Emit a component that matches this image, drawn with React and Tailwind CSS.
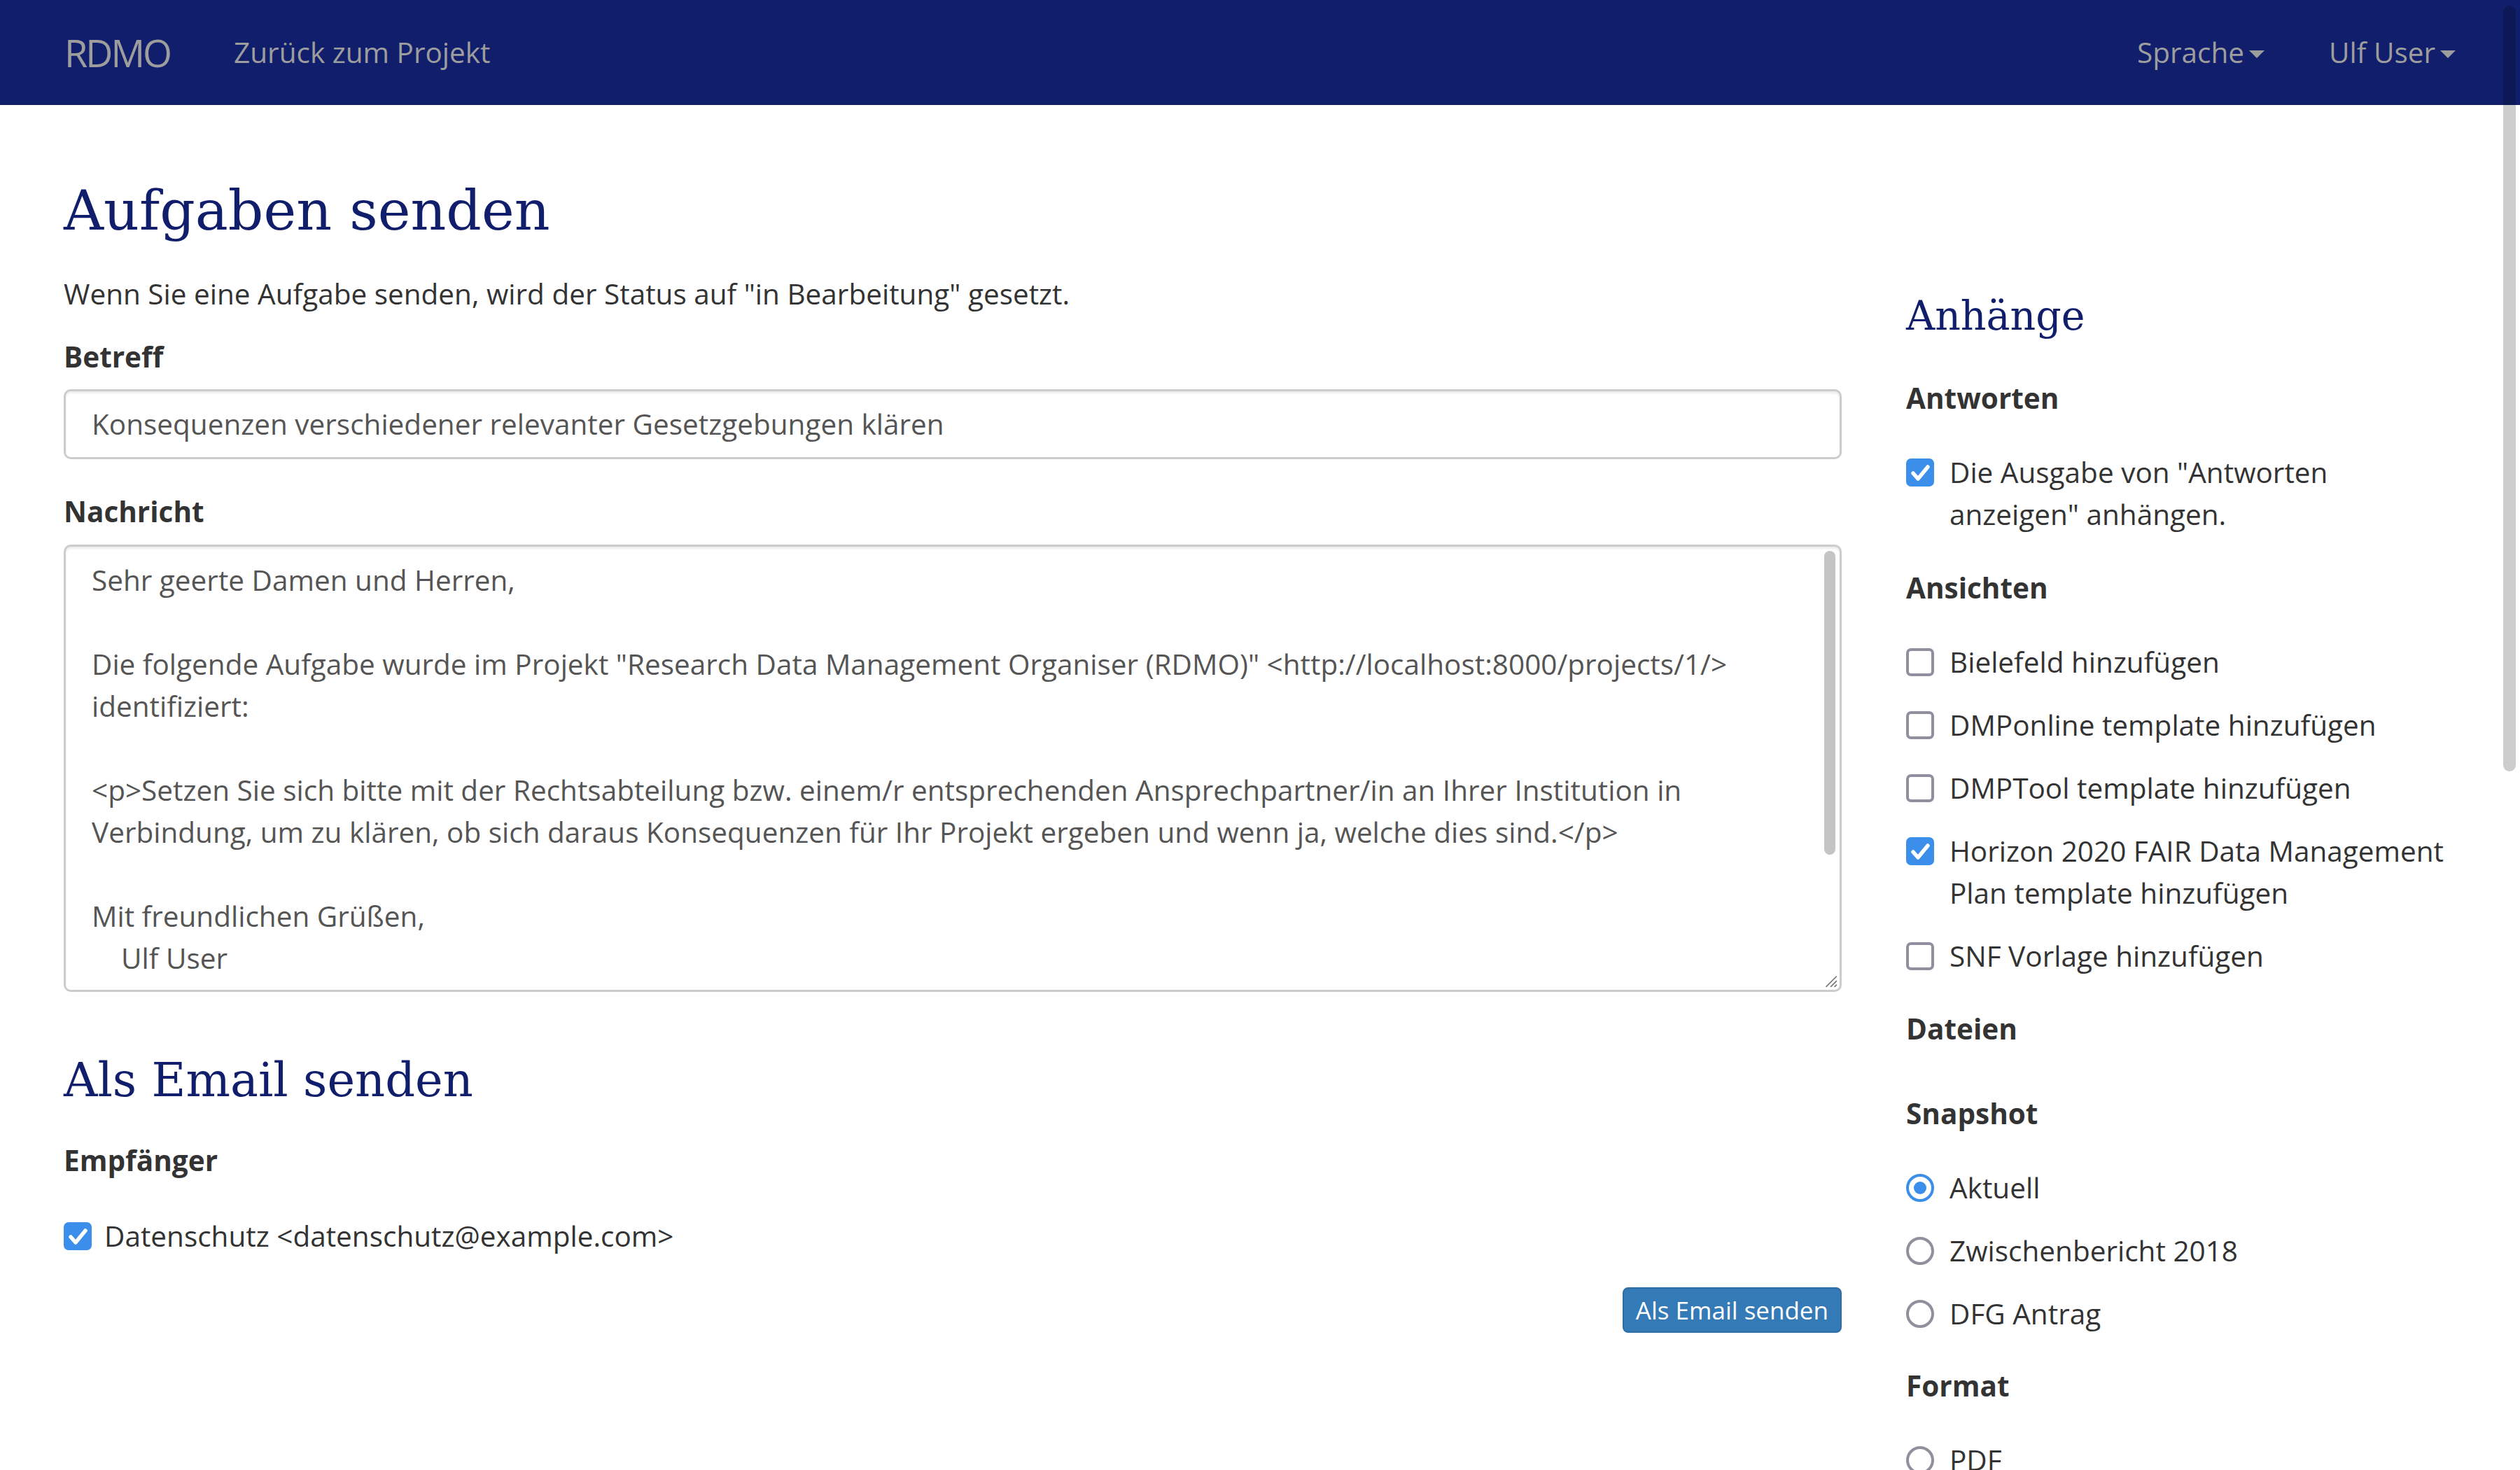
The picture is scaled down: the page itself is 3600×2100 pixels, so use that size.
import React from 'react';

const NAVY = 'text-[#111e6c]';

const Caret = () => (
  <span className="ml-[7px] mt-[4px] h-0 w-0 border-x-[11px] border-t-[11px] border-x-transparent border-t-[#9d9d9d]" />
);

const CheckBox = ({ checked }) =>
  checked ? (
    <span className="mt-[10px] flex h-[40px] w-[40px] shrink-0 items-center justify-center rounded-[7px] bg-[#3b8ee9]">
      <svg viewBox="0 0 40 40" className="h-[40px] w-[40px]">
        <path d="M10 21 L17 29 L31 12" fill="none" stroke="white" strokeWidth="5.5" strokeLinecap="round" strokeLinejoin="round" />
      </svg>
    </span>
  ) : (
    <span className="mt-[10px] h-[40px] w-[40px] shrink-0 rounded-[7px] border-[4px] border-[#8f8f9d] bg-white" />
  );

const Radio = ({ checked }) =>
  checked ? (
    <span className="mt-[10px] flex h-[40px] w-[40px] shrink-0 items-center justify-center rounded-full border-[4px] border-[#3b8ee9]">
      <span className="h-[18px] w-[18px] rounded-full bg-[#3b8ee9]" />
    </span>
  ) : (
    <span className="mt-[10px] h-[40px] w-[40px] shrink-0 rounded-full border-[4px] border-[#8f8f9d]" />
  );

const Option = ({ control, lines }) => (
  <div className="flex gap-[22px]">
    {control}
    <div>
      {lines.map((l, i) => (
        <div key={i}>{l}</div>
      ))}
    </div>
  </div>
);

const Group = ({ title, className = 'mt-[45px]', children }) => (
  <div className={className}>
    <div className="font-bold">{title}</div>
    {children && <div className="mt-[46px] flex flex-col gap-[30px]">{children}</div>}
  </div>
);

const message = [
  'Sehr geerte Damen und Herren,',
  '',
  'Die folgende Aufgabe wurde im Projekt "Research Data Management Organiser (RDMO)" <http://localhost:8000/projects/1/>',
  'identifiziert:',
  '',
  '<p>Setzen Sie sich bitte mit der Rechtsabteilung bzw. einem/r entsprechenden Ansprechpartner/in an Ihrer Institution in',
  'Verbindung, um zu klären, ob sich daraus Konsequenzen für Ihr Projekt ergeben und wenn ja, welche dies sind.</p>',
  '',
  'Mit freundlichen Grüßen,',
  '    Ulf User',
];

export default function App() {
  return (
    <div className="relative h-[2100px] overflow-hidden bg-white font-['Open_Sans','Noto_Sans',sans-serif] text-[40.5px] leading-[60px] text-[#333]">
      {/* Navbar */}
      <nav className="flex h-[150px] items-center bg-[#111e6c] px-[92px] text-[#9d9d9d]">
        <span className="text-[54px] tracking-[-3px]">RDMO</span>
        <span className="ml-[91px]">Zurück zum Projekt</span>
        <div className="ml-auto flex items-center gap-[92px]">
          <span className="flex items-center">
            Sprache
            <Caret />
          </span>
          <span className="flex items-center">
            Ulf User
            <Caret />
          </span>
        </div>
      </nav>

      <div className="flex gap-[92px] pl-[91px]">
        {/* Main column */}
        <main className="w-[2540px]">
          <h1 className={`mt-[104px] font-['DejaVu_Serif',serif] text-[79px] leading-[94px] ${NAVY}`}>
            Aufgaben senden
          </h1>
          <p className="mt-[42px]">Wenn Sie eine Aufgabe senden, wird der Status auf "in Bearbeitung" gesetzt.</p>

          <div className="mt-[30px] font-bold">Betreff</div>
          <div className="mt-[16px] flex h-[100px] items-center rounded-[10px] border-[3px] border-[#ccc] px-[37px] text-[#555] shadow-[inset_0_3px_3px_rgba(0,0,0,0.075)]">
            Konsequenzen verschiedener relevanter Gesetzgebungen klären
          </div>

          <div className="mt-[45px] font-bold">Nachricht</div>
          <div className="relative mt-[17px] h-[639px] overflow-hidden rounded-[10px] border-[3px] border-[#ccc] px-[37px] pt-[18px] text-[#555] shadow-[inset_0_3px_3px_rgba(0,0,0,0.075)]">
            {message.map((line, i) => (
              <div key={i} className="h-[60px] whitespace-pre">
                {line}
              </div>
            ))}
            <span className="absolute right-[6px] top-[6px] h-[434px] w-[16px] rounded-full bg-[#c4c4c4]" />
            <svg viewBox="0 0 20 20" className="absolute bottom-[3px] right-[3px] h-[22px] w-[22px]">
              <path d="M19 5 L5 19 M19 11 L11 19 M19 16 L16 19" stroke="#7a7a7a" strokeWidth="1.6" />
            </svg>
          </div>

          <h2 className={`mt-[86px] font-['DejaVu_Serif',serif] text-[67px] leading-[80px] ${NAVY}`}>Als Email senden</h2>
          <div className="mt-[45px] font-bold">Empfänger</div>
          <div className="mt-[48px] flex gap-[18px]">
            <CheckBox checked />
            <span>{'Datenschutz <datenschutz@example.com>'}</span>
          </div>
          <div className="mt-[43px] flex justify-end">
            <button className="h-[65px] rounded-[8px] border-[2px] border-[#2e6da4] bg-[#337ab7] px-[17px] text-[35px] leading-[50px] text-white">
              Als Email senden
            </button>
          </div>
        </main>

        {/* Sidebar */}
        <aside className="w-[797px]">
          <h2 className={`mt-[267px] font-['DejaVu_Serif',serif] text-[57px] leading-[68px] ${NAVY}`}>Anhänge</h2>

          <Group title="Antworten" className="mt-[54px]">
            <Option control={<CheckBox checked />} lines={['Die Ausgabe von "Antworten', 'anzeigen" anhängen.']} />
          </Group>

          <Group title="Ansichten">
            <Option control={<CheckBox />} lines={['Bielefeld hinzufügen']} />
            <Option control={<CheckBox />} lines={['DMPonline template hinzufügen']} />
            <Option control={<CheckBox />} lines={['DMPTool template hinzufügen']} />
            <Option control={<CheckBox checked />} lines={['Horizon 2020 FAIR Data Management', 'Plan template hinzufügen']} />
            <Option control={<CheckBox />} lines={['SNF Vorlage hinzufügen']} />
          </Group>

          <Group title="Dateien" className="mt-[44px]" />

          <Group title="Snapshot" className="mt-[61px]">
            <Option control={<Radio checked />} lines={['Aktuell']} />
            <Option control={<Radio />} lines={['Zwischenbericht 2018']} />
            <Option control={<Radio />} lines={['DFG Antrag']} />
          </Group>

          <Group title="Format" className="mt-[43px]">
            <Option control={<Radio />} lines={['PDF']} />
          </Group>
        </aside>
      </div>

      {/* page scrollbar thumb */}
      <span className="absolute right-[6px] top-[8px] h-[1094px] w-[18px] rounded-full bg-black/20" />
    </div>
  );
}
